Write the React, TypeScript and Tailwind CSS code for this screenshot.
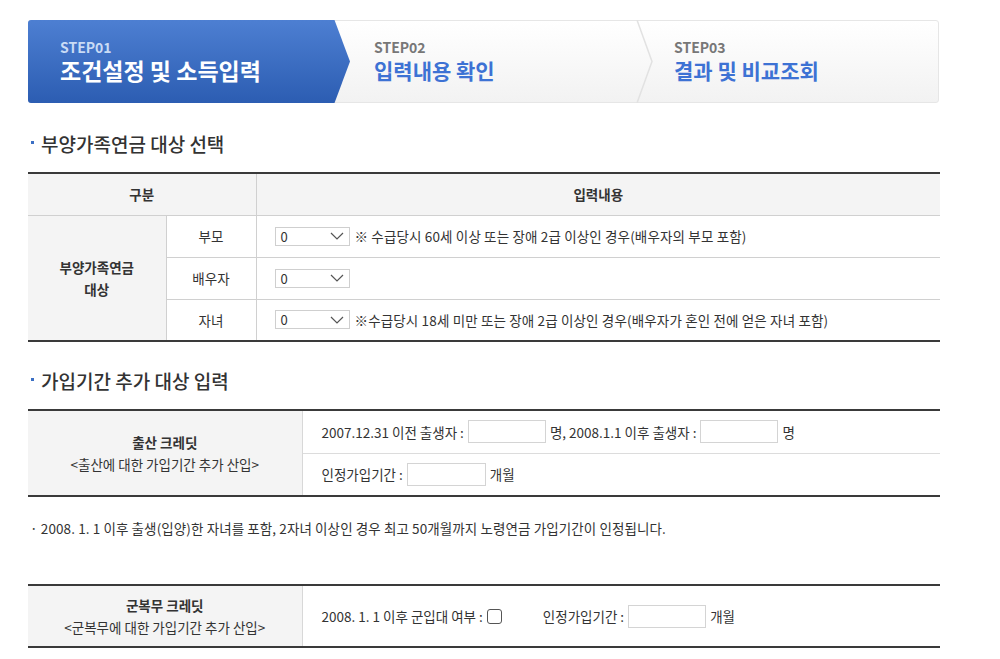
import React from "react";

const font = { fontFamily: '"Noto Sans CJK KR", "Noto Sans", sans-serif' };

function SelectBox() {
  return (
    <div className="flex h-[19px] w-[75px] items-center justify-between border border-[#cfcfcf] bg-white pl-[5px] pr-[5px] text-[13px] leading-none text-[#333]">
      <span>0</span>
      <svg width="14" height="8" viewBox="0 0 14 8" fill="none">
        <polyline points="1,1 7,7 13,1" stroke="#555" strokeWidth="1.2" />
      </svg>
    </div>
  );
}

function TextBox({ w = 78 }: { w?: number }) {
  return <div className="h-[23px] border border-[#d4d4d4] bg-white" style={{ width: w }} />;
}

function Heading({ children }: { children: React.ReactNode }) {
  return (
    <div className="flex items-center text-[19px] font-medium leading-[28px] text-[#333]">
      <span className="mr-[7px] ml-[3px] h-[3px] w-[3px] -translate-y-[2px] bg-[#3b6fc4]" />
      {children}
    </div>
  );
}

function StepBar() {
  return (
    <div className="relative flex h-[83px] rounded-[3px] border border-[#e6e6e6] bg-gradient-to-b from-white to-[#f2f2f2]">
      <div className="flex h-[83px] -mt-px -ml-px">
        <div className="flex w-[306px] flex-col justify-center rounded-l-[3px] bg-gradient-to-b from-[#4d7fd2] to-[#2c5db2] pl-[32px]">
          <div className="text-[14px] font-bold leading-[16px] text-[#c9dbf5]">STEP01</div>
          <div className="text-[23px] font-bold leading-[30px] text-white">조건설정 및 소득입력</div>
        </div>
        <svg width="16" height="83" viewBox="0 0 16 83" className="block">
          <defs>
            <linearGradient id="g1" x1="0" y1="0" x2="0" y2="1">
              <stop offset="0" stopColor="#4d7fd2" />
              <stop offset="1" stopColor="#2c5db2" />
            </linearGradient>
          </defs>
          <polygon points="0,0 0.5,0 16,41.5 0.5,83 0,83" fill="url(#g1)" />
        </svg>
      </div>
      <div className="flex w-[285px] flex-col justify-center pl-[24px]">
        <div className="text-[14px] font-bold leading-[16px] text-[#777]">STEP02</div>
        <div className="text-[21px] font-bold leading-[30px] text-[#3d72d4]">입력내용 확인</div>
      </div>
      <svg width="20" height="83" viewBox="0 0 20 83" className="-mt-px block">
        <polyline points="2,0 17,41.5 2,83" fill="none" stroke="#e2e2e2" strokeWidth="1.5" />
      </svg>
      <div className="flex flex-col justify-center pl-[19px]">
        <div className="text-[14px] font-bold leading-[16px] text-[#777]">STEP03</div>
        <div className="text-[21px] font-bold leading-[30px] text-[#3d72d4]">결과 및 비교조회</div>
      </div>
    </div>
  );
}

export default function App() {
  const rows = [
    { label: "부모", note: "※ 수급당시 60세 이상 또는 장애 2급 이상인 경우(배우자의 부모 포함)" },
    { label: "배우자", note: "" },
    { label: "자녀", note: "※수급당시 18세 미만 또는 장애 2급 이상인 경우(배우자가 혼인 전에 얻은 자녀 포함)" },
  ];

  return (
    <div className="min-h-[659px] bg-white pt-[20px] pl-[28px] text-[13.5px] text-[#333]" style={font}>
      <div className="w-[911px]">
        <StepBar />
      </div>

      <div className="w-[912px]">
        <div className="pt-[27px] pb-[14px]">
          <Heading>부양가족연금 대상 선택</Heading>
        </div>

        <table className="w-full border-collapse border-y-2 border-y-[#3a3a3a] text-[13.5px]">
          <tbody>
            <tr className="h-[42px] border-b border-[#d0d0d0] bg-[#f4f4f4]">
              <th colSpan={2} className="w-[228px] border-r border-[#d0d0d0] font-bold">구분</th>
              <th className="font-bold">입력내용</th>
            </tr>
            {rows.map((r, i) => (
              <tr key={r.label} className={`h-[42px] ${i < 2 ? "border-b border-[#d0d0d0]" : ""}`}>
                {i === 0 && (
                  <th rowSpan={3} className="w-[138px] border-r border-[#d0d0d0] bg-[#f4f4f4] font-bold leading-[22px]">
                    부양가족연금
                    <br />
                    대상
                  </th>
                )}
                <td className="w-[90px] border-r border-[#d0d0d0] text-center">{r.label}</td>
                <td className="pl-[18px]">
                  <div className="flex items-center gap-[5px]">
                    <SelectBox />
                    {r.note && <span className="tracking-[0.15px]">{r.note}</span>}
                  </div>
                </td>
              </tr>
            ))}
          </tbody>
        </table>

        <div className="pt-[25px] pb-[14px]">
          <Heading>가입기간 추가 대상 입력</Heading>
        </div>

        <table className="w-full border-collapse border-y-2 border-y-[#3a3a3a] text-[13.5px]">
          <tbody>
            <tr className="h-[43px] border-b border-[#dcdcdc]">
              <th rowSpan={2} className="w-[274px] border-r border-[#d8d8d8] bg-[#f4f4f4] font-normal leading-[22px]">
                <div className="font-bold">출산 크레딧</div>
                <div>&lt;출산에 대한 가입기간 추가 산입&gt;</div>
              </th>
              <td className="pl-[19px]">
                <div className="flex items-center">
                  <span className="mr-[4px]">2007.12.31 이전 출생자 :</span>
                  <TextBox w={78} />
                  <span className="ml-[4px] mr-[4px]">명, 2008.1.1 이후 출생자 :</span>
                  <TextBox w={78} />
                  <span className="ml-[4px]">명</span>
                </div>
              </td>
            </tr>
            <tr className="h-[43px]">
              <td className="pl-[19px]">
                <div className="flex items-center">
                  <span className="mr-[4px]">인정가입기간 :</span>
                  <TextBox w={79} />
                  <span className="ml-[4px]">개월</span>
                </div>
              </td>
            </tr>
          </tbody>
        </table>

        <div className="pt-[21px] pb-[46px] pl-[2px] leading-[20px] tracking-[0.1px]">
          · 2008. 1. 1 이후 출생(입양)한 자녀를 포함, 2자녀 이상인 경우 최고 50개월까지 노령연금 가입기간이 인정됩니다.
        </div>

        <table className="w-full border-collapse border-y-2 border-y-[#3a3a3a] text-[13.5px]">
          <tbody>
            <tr className="h-[62px]">
              <th className="w-[274px] border-r border-[#d8d8d8] bg-[#f4f4f4] font-normal leading-[22px]">
                <div className="font-bold">군복무 크레딧</div>
                <div>&lt;군복무에 대한 가입기간 추가 산입&gt;</div>
              </th>
              <td className="pl-[19px]">
                <div className="flex items-center">
                  <span className="mr-[4px]">2008. 1. 1 이후 군입대 여부 :</span>
                  <span className="h-[15px] w-[15px] rounded-[3px] border border-[#555] bg-white" />
                  <span className="ml-[41px] mr-[4px]">인정가입기간 :</span>
                  <TextBox w={78} />
                  <span className="ml-[4px]">개월</span>
                </div>
              </td>
            </tr>
          </tbody>
        </table>
      </div>
    </div>
  );
}
